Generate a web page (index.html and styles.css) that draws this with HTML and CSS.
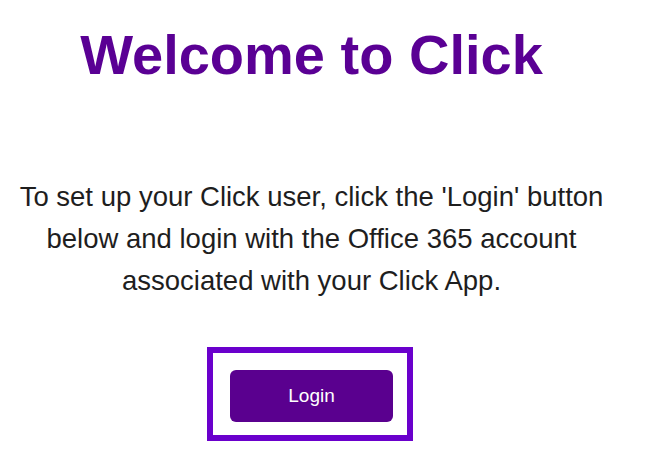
FILE: index.html
```html
<!DOCTYPE html>
<html>
<head>
<meta charset="utf-8">
<link rel="stylesheet" href="styles.css">
</head>
<body>
<div class="page">
  <h1 class="title">Welcome to Click</h1>
  <p class="intro">To set up your Click user, click the 'Login' button below and login with the Office 365 account associated with your Click App.</p>
  <div class="actions">
    <div class="focus-box">
      <button class="login-btn" type="button">Login</button>
    </div>
  </div>
</div>
</body>
</html>
```
FILE: styles.css
```css
html, body {
  margin: 0;
  padding: 0;
  background: #ffffff;
}
.page {
  width: 623px;
  font-family: "Liberation Sans", Arial, sans-serif;
  text-align: center;
}
.title {
  margin: 22px 0 0;
  font-size: 56px;
  font-weight: bold;
  line-height: normal;
  color: #5a0094;
}
.intro {
  margin: 89px 0 0;
  padding: 0 8px;
  font-size: 27.5px;
  line-height: 42px;
  color: #1e1e1e;
}
.actions {
  margin-top: 45px;
}
.focus-box {
  display: inline-block;
  margin-right: 3px;
  border: 6px solid #6a00cc;
  padding: 17px 14px 13px 17px;
}
.login-btn {
  display: block;
  width: 163px;
  height: 52px;
  border: none;
  border-radius: 6px;
  background: #5a008f;
  color: #ffffff;
  font-family: "Liberation Sans", Arial, sans-serif;
  font-size: 19px;
  padding: 0;
}
```
